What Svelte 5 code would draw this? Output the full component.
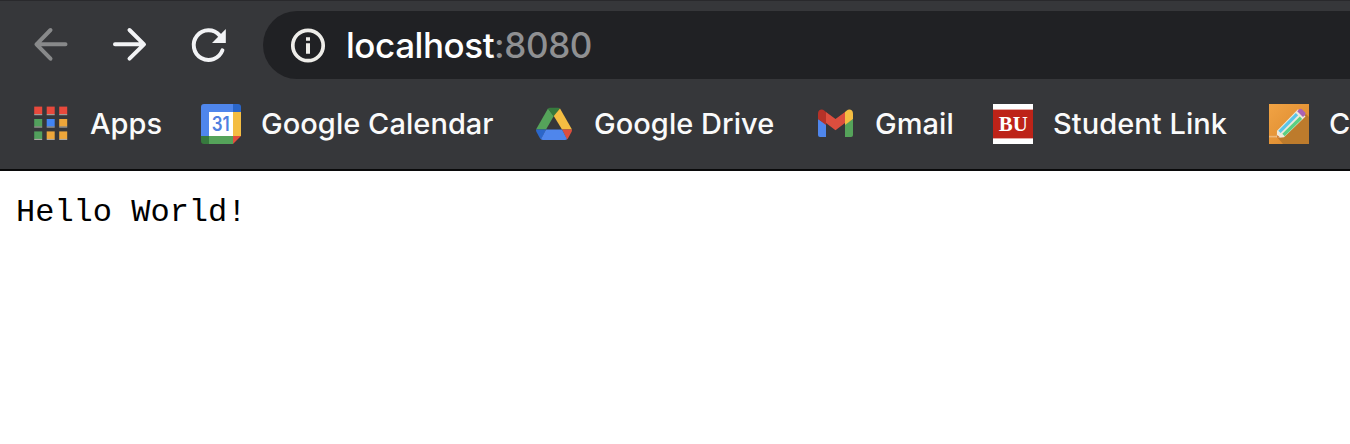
<script>
  const bookmarks = [
    { icon: 'apps', label: 'Apps' },
    { icon: 'calendar', label: 'Google Calendar' },
    { icon: 'drive', label: 'Google Drive' },
    { icon: 'gmail', label: 'Gmail' },
    { icon: 'bu', label: 'Student Link' },
    { icon: 'pencil', label: 'C' },
  ];
  const appColors = ['#e8493c', '#e8493c', '#e8493c', '#52a05c', '#4285f4', '#eda63a', '#52a05c', '#eda63a', '#eda63a'];
</script>

<div class="browser">
  <header class="toolbar">
    <nav class="controls">
      <svg class="back" width="40" height="40" viewBox="0 0 40 40"><path d="M20.5 6 6.5 20.3 20.5 34.7M6.5 20.3H35.5" /></svg>
      <svg width="40" height="40" viewBox="0 0 40 40"><path d="M20.5 6 35 20.3 20.5 34.7M34.5 20.3H6" /></svg>
      <svg width="40" height="40" viewBox="0 0 40 40">
        <path d="M34.4 26.4A14.8 14.8 0 1 1 31.6 11.3" />
        <path class="solid" d="M37.8 5V19H24Z" />
      </svg>
    </nav>
    <div class="address">
      <svg width="36" height="36" viewBox="0 0 36 36">
        <circle cx="18" cy="18.5" r="15.2" fill="none" stroke="#eeede9" stroke-width="3.7" />
        <path d="M16 10.2h4v3.6h-4zM16 16.2h4v10.6h-4z" fill="#eeede9" />
      </svg>
      <div class="url"><span class="host">localhost</span><span class="port">:8080</span></div>
    </div>
  </header>

  <nav class="bookmarks">
    {#each bookmarks as b}
      <div class="bookmark">
        <svg width="40" height="40" viewBox="0 0 40 40">
          {#if b.icon === 'apps'}
            {#each appColors as c, i}
              <rect x={3.2 + (i % 3) * 12.5} y={2.6 + Math.floor(i / 3) * 12.4} width="8" height="7.6" fill={c} />
              <rect x={3.2 + (i % 3) * 12.5} y={10.1 + Math.floor(i / 3) * 12.4} width="8" height="1.1" fill="#aaa7a2" />
            {/each}
          {:else if b.icon === 'calendar'}
            <path d="M3 0H32V8H8V32H0V3Q0 0 3 0Z" fill="#4f86ec" />
            <path d="M32 0H37Q40 0 40 3V8H32Z" fill="#2b66c9" />
            <path d="M32 8H40V32H32Z" fill="#f4bd42" />
            <path d="M8 8H32V32H8Z" fill="#fff" />
            <path d="M8 32H32V40H8Z" fill="#55a35a" />
            <path d="M0 32H8V40H3Q0 40 0 37Z" fill="#36793d" />
            <path d="M32 32H40L32 40Z" fill="#e24d3b" />
            <text x="19.8" y="27.3" text-anchor="middle" textLength="18" lengthAdjust="spacingAndGlyphs" class="date">31</text>
          {:else if b.icon === 'drive'}
            <path d="M14 4.5 2 25.5H12L19.8 12Z" fill="#55a35a" />
            <path d="M14 4.5Q14.7 3.8 16 3.8H24Q25.2 3.8 26 4.5L19.8 12.8Z" fill="#36793d" />
            <path d="M26 4.5 38 25.5H28L19.8 12Z" fill="#f4bd42" />
            <path d="M2 25.5H12L7.2 35.5Q6.4 35 5.8 34L2.5 28Q2 27 2 25.5Z" fill="#2b66c9" />
            <path d="M28 25.5H38Q38 27 37.5 28L34.2 34Q33.6 35 32.8 35.5Z" fill="#dc4e3e" />
            <path d="M12 25.5H28L33 35.3Q32.1 36 31 36H9Q7.9 36 7 35.3Z" fill="#4f86ec" />
          {:else if b.icon === 'gmail'}
            <path d="M3 15 11 20V33H5Q3 33 3 31Z" fill="#4f86ec" />
            <path d="M30 20 38 15V31Q38 33 36 33H30Z" fill="#55a35a" />
            <path d="M3 15V9.5C3 5.5 7 4.6 9.5 6.7L11 8V21Z" fill="#b53228" />
            <path d="M30 8 31.5 6.7C34 4.6 38 5.5 38 9.5V15L30 21Z" fill="#f4bd42" />
            <path d="M11 8 20.5 15 30 8V19L20.5 26.2 11 19Z" fill="#dc4e3e" />
          {:else if b.icon === 'bu'}
            <rect width="40" height="40" fill="#fff" />
            <rect y="5.6" width="40" height="28.8" fill="#bd2318" />
            <text x="20.3" y="27.4" text-anchor="middle" textLength="29" lengthAdjust="spacingAndGlyphs" class="bu">BU</text>
          {:else}
            <defs>
              <linearGradient id="amber" x1="0" y1="0" x2="1" y2="1">
                <stop offset="0" stop-color="#f1a344" /><stop offset="1" stop-color="#d9862b" />
              </linearGradient>
            </defs>
            <rect width="40" height="40" fill="url(#amber)" />
            <path d="M37 10 40 13V40H14L8 33Z" fill="#bd7b2c" />
            <path d="M0 31.8H9V33.4H0Z" fill="#efb878" />
            <path d="M8 26.8 29 5.3 36.5 12.5 15 33.3 7.8 34Z" fill="#eee9da" />
            <path d="M10.5 27.8 28 10.2" stroke="#5bc5e8" stroke-width="3.3" />
            <path d="M14.5 31 32 13.8" stroke="#5bd083" stroke-width="3.3" />
            <path d="M28.2 7.3 30.5 5Q32 4.2 33 5.2L36.2 8.4Q37.2 9.7 36 11L34 13Z" fill="#aa62b4" />
            <path d="M7.8 34 8.3 31 11 33.6Z" fill="#d47926" />
          {/if}
        </svg>
        <span class="label">{b.label}</span>
      </div>
    {/each}
  </nav>

  <main><pre>Hello World!</pre></main>
</div>

<style>
  :global(body) { background: #fff; }
  .browser { width: 1350px; height: 444px; overflow: hidden; background: #fff; display: flex; flex-direction: column; font-family: Inter, sans-serif; }
  svg { display: block; flex: none; }
  .toolbar { box-sizing: border-box; flex: none; height: 80px; padding-top: 10px; border-top: 1px solid #29292c; background: #36373a; display: flex; align-items: flex-start; }
  .controls { width: 263px; flex: none; box-sizing: border-box; padding: 13px 0 0 30px; display: flex; gap: 39px; }
  .controls path { fill: none; stroke: #f2f3f5; stroke-width: 4; stroke-linecap: round; stroke-linejoin: round; }
  .controls .back path { stroke: #88898a; }
  .controls .solid { fill: #f2f3f5; stroke: none; }
  .address { flex: 1; height: 68px; border-radius: 34px 0 0 34px; background: #202124; display: flex; align-items: center; padding-left: 27px; gap: 20px; }
  .url { font-size: 35px; line-height: 68px; white-space: nowrap; }
  .host { color: #fff; font-weight: 500; letter-spacing: -0.45px; }
  .port { color: #8f9092; font-weight: 500; letter-spacing: -0.4px; }
  .bookmarks { box-sizing: border-box; flex: none; height: 91px; padding: 24px 0 0 31px; background: #36373a; border-bottom: 2px solid #09090a; display: grid; grid-template-columns: 170px 333px 281px 178px 276px 150px; align-items: start; }
  .bookmark { display: flex; align-items: center; gap: 20px; height: 40px; }
  .bookmark:first-child { gap: 19px; }
  .label { color: #fafafa; font-size: 29px; font-weight: 500; letter-spacing: 0.05px; line-height: 40px; white-space: nowrap; }
  .date { font: 600 19.5px Inter, sans-serif; fill: #4f7fe0; }
  .bu { font: 700 21px "Liberation Serif", serif; fill: #fff; }
  main { padding: 22px 16px; }
  pre { margin: 0; font: 32px/40px "Liberation Mono", monospace; color: #000; }
</style>
